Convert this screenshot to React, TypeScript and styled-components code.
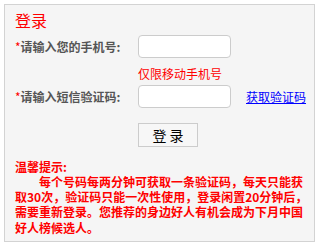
import React from "react";
import styled, { createGlobalStyle } from "styled-components";

const Global = createGlobalStyle`
  html, body { margin: 0; padding: 0; background: #ffffff; }
  body { font-family: "Noto Sans CJK SC", "Noto Sans", sans-serif; }
`;

const Panel = styled.div`
  box-sizing: border-box;
  margin: 4px 0 0 4px;
  width: 311px;
  height: 238px;
  border: 1px solid #d3d3d3;
  background: #f5f5f5;
  padding: 5px 9px 0 10px;
`;

const Title = styled.h2`
  margin: 0;
  font-size: 16px;
  line-height: 20px;
  font-weight: normal;
  color: #ff0000;
`;

const FieldRow = styled.div<{ $top: number }>`
  display: grid;
  grid-template-columns: 123px 93px auto;
  align-items: center;
  margin-top: ${(p) => p.$top}px;
`;

const Label = styled.label`
  font-size: 12px;
  line-height: 16px;
  font-weight: bold;
  color: #555555;
  white-space: nowrap;
`;

const Star = styled.span`
  color: #ff0000;
  font-weight: normal;
`;

const TextInput = styled.input`
  box-sizing: border-box;
  width: 93px;
  height: 23px;
  border: 1px solid #cccccc;
  border-radius: 4px;
  background: #ffffff;
  padding: 0 4px;
  outline: none;
`;

const CodeLink = styled.a`
  margin-left: 15px;
  font-size: 12px;
  line-height: 16px;
  color: #0000ff;
  text-decoration: underline;
  white-space: nowrap;
`;

const Hint = styled.div`
  margin-top: 7.5px;
  padding-left: 123px;
  font-size: 12px;
  line-height: 16px;
  color: #ff0000;
`;

const ButtonRow = styled.div`
  margin-top: 14px;
  padding-left: 123px;
`;

const LoginButton = styled.button`
  box-sizing: border-box;
  width: 60px;
  height: 24px;
  border: 1px solid #cccccc;
  border-radius: 0;
  background: #f7f7f7;
  font-family: "Noto Sans CJK SC", sans-serif;
  font-size: 14px;
  line-height: 20px;
  color: #000000;
  padding: 0;
`;

const Notice = styled.div`
  margin-top: 11.5px;
  width: 292px;
  font-size: 12px;
  line-height: 15.25px;
  font-weight: bold;
  color: #ff0000;
  white-space: nowrap;
`;

const Indent = styled.span`
  display: inline-block;
  width: 24px;
`;

export default function App() {
  return (
    <>
      <Global />
      <Panel>
        <Title>登录</Title>
        <FieldRow $top={5}>
          <Label>
            <Star>*</Star>请输入您的手机号:
          </Label>
          <TextInput type="text" />
        </FieldRow>
        <Hint>仅限移动手机号</Hint>
        <FieldRow $top={3.5}>
          <Label>
            <Star>*</Star>请输入短信验证码:
          </Label>
          <TextInput type="text" />
          <CodeLink href="#">获取验证码</CodeLink>
        </FieldRow>
        <ButtonRow>
          <LoginButton>登 录</LoginButton>
        </ButtonRow>
        <Notice>
          温馨提示:
          <br />
          <Indent />
          每个号码每两分钟可获取一条验证码，每天只能获
          <br />
          取30次，验证码只能一次性使用，登录闲置20分钟后，
          <br />
          需要重新登录。您推荐的身边好人有机会成为下月中国
          <br />
          好人榜候选人。
        </Notice>
      </Panel>
    </>
  );
}
